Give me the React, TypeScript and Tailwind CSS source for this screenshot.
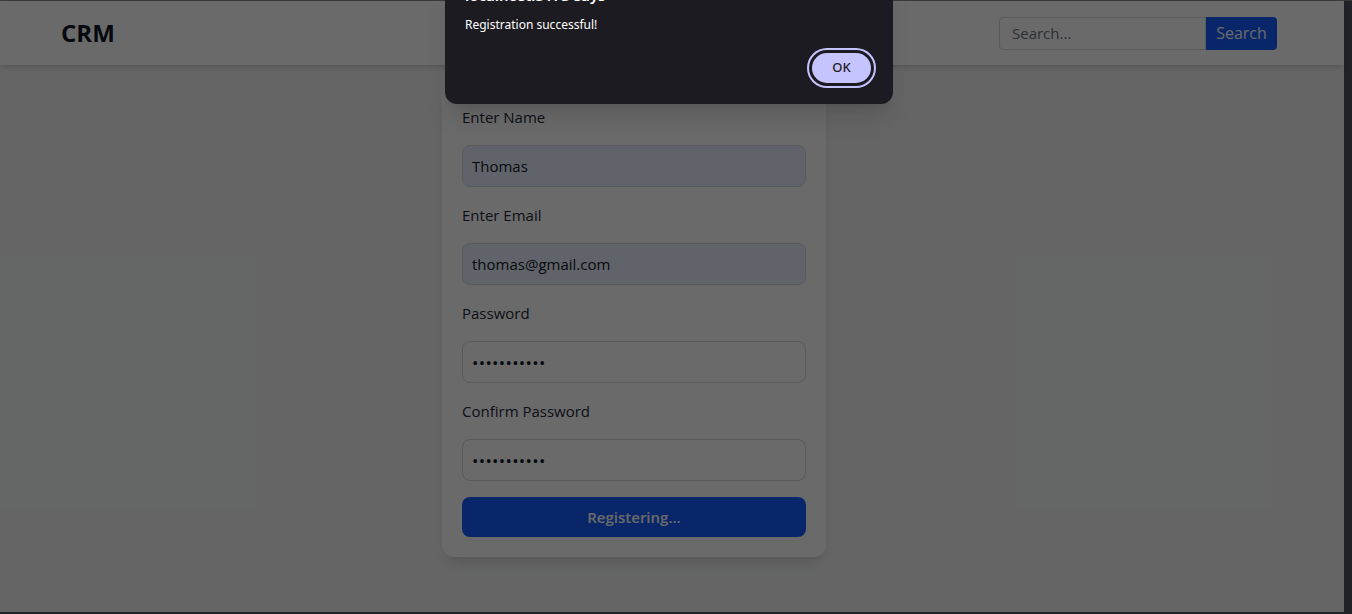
import React from 'react';

const fields = [
  { label: 'Enter Name', type: 'text', value: 'Thomas', filled: true },
  { label: 'Enter Email', type: 'email', value: 'thomas@gmail.com', filled: true },
  { label: 'Password', type: 'password', value: 'thomas12345', filled: false },
  { label: 'Confirm Password', type: 'password', value: 'thomas12345', filled: false },
];

const App: React.FC = () => {
  return (
    <div className="w-[1352px] h-[614px] flex flex-col bg-[#1f2227] overflow-hidden relative font-['Open_Sans',sans-serif]">
      <div className="h-px bg-[#3a3a3a]" />
      <div className="flex flex-1">
        {/* page */}
        <div className="flex-1 flex flex-col bg-gray-100 relative">
          <header className="h-16 bg-white shadow-md flex items-center justify-between pl-[61px] pr-[67px]">
            <h1 className="text-2xl font-bold text-gray-900">CRM</h1>
            <div className="flex">
              <input
                readOnly
                placeholder="Search..."
                className="w-[207px] h-[33px] border border-gray-300 rounded-l px-3 text-[15px] outline-none placeholder:text-gray-500"
              />
              <button className="h-[33px] w-[71px] bg-blue-600 text-white rounded-r text-base">Search</button>
            </div>
          </header>

          <main className="flex-1 flex justify-center pt-5 pr-[76px]">
            <form className="w-96 h-fit bg-white rounded-xl shadow-lg p-5">
              {fields.map((f) => (
                <div key={f.label}>
                  <label className="block text-[15px] leading-6 text-gray-800 mb-4">{f.label}</label>
                  <input
                    readOnly
                    type={f.type}
                    value={f.value}
                    className={`w-full h-[42px] rounded-lg border border-gray-300 px-[9px] text-gray-900 outline-none mb-4 ${
                      f.filled ? 'bg-[#e8f0fe] text-[15px]' : 'bg-white text-[17px] tracking-[0.3px]'
                    }`}
                  />
                </div>
              ))}
              <button type="button" className="w-full h-10 rounded-lg bg-blue-600 text-white font-semibold text-[15px]">
                Registering...
              </button>
            </form>
          </main>

          {/* dim backdrop behind the alert */}
          <div className="absolute inset-0 bg-black/[0.584]" />
        </div>
        {/* scrollbar strip */}
        <div className="w-2 bg-[#1f2227]" />
      </div>
      <div className="h-0.5 bg-[#1f2227]" />

      {/* browser alert */}
      <div className="absolute left-[445px] top-[-24px] w-[448px] h-[128px] rounded-xl bg-[#1c1b22] shadow-xl flex flex-col pt-[9px] pl-5 pr-[17px] font-['Noto_Sans',sans-serif]">
        <p className="h-5 leading-5 text-[15px] font-semibold text-white">localhost:5173 says</p>
        <p className="mt-[11px] text-[12px] leading-[18px] text-white">Registration successful!</p>
        <div className="flex justify-end mt-[14px]">
          <button className="rounded-full bg-[#c6c4ff] p-[2px]">
            <span className="flex items-center justify-center w-[65px] h-9 rounded-full border-[3px] border-[#1c1b22] bg-[#c6c4ff] text-[13px] font-medium text-[#1c1b22]">
              OK
            </span>
          </button>
        </div>
      </div>
    </div>
  );
};

export default App;
